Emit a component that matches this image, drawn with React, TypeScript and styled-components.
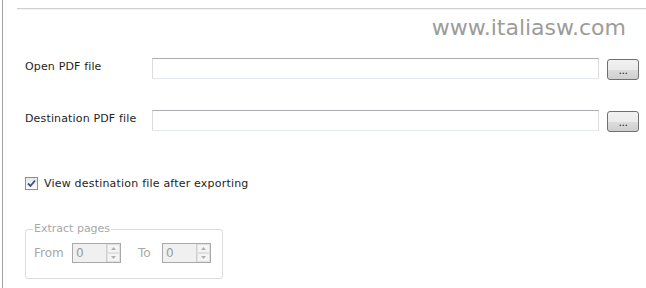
import React from 'react'
import styled, { createGlobalStyle } from 'styled-components'

const GlobalStyle = createGlobalStyle`
  html, body {
    margin: 0;
    padding: 0;
    background: #ffffff;
  }
  body {
    font-family: "DejaVu Sans", Verdana, sans-serif;
    font-size: 11px;
    color: #1e1e1e;
  }
`

const Frame = styled.div`
  margin-left: 2px;
  height: 288px;
  border-left: 1px solid #a3a3a3;
  box-sizing: border-box;
  overflow: hidden;
`

const TopRule = styled.div`
  margin: 8px 0 0 14px;
  height: 1px;
  background: #cfcfcf;
  border-bottom: 1px solid #f4f4f4;
`

const Watermark = styled.div`
  text-align: right;
  padding-right: 20px;
  margin-top: 5px;
  height: 26px;
  font-size: 22px;
  line-height: 26px;
  color: #9c9c9c;
`

const Content = styled.div`
  padding: 0 7px 0 22px;
  display: flex;
  flex-direction: column;
`

const FileRow = styled.div<{ $top: number }>`
  display: flex;
  align-items: center;
  gap: 8px;
  margin-top: ${p => p.$top}px;
  height: 21px;
`

const Label = styled.div`
  width: 119px;
  flex: none;
  margin-top: -4px;
  letter-spacing: 0.15px;
`

const PathInput = styled.input`
  flex: 1;
  height: 21px;
  box-sizing: border-box;
  border: 1px solid #dcdcdc;
  border-top-color: #abadb3;
  border-bottom-color: #e3e9ef;
  background: #fff;
  padding: 0 4px;
  font: inherit;
  outline: none;
`

const BrowseButton = styled.button`
  width: 32px;
  height: 21px;
  margin-top: 2px;
  flex: none;
  box-sizing: border-box;
  border: 1px solid #707070;
  border-radius: 3px;
  background: linear-gradient(#f2f2f2 0%, #ebebeb 50%, #dddddd 51%, #cfcfcf 100%);
  font: inherit;
  font-size: 11px;
  line-height: 17px;
  padding: 2px 0 0;
  color: #1e1e1e;
  letter-spacing: -0.5px;
`

const CheckRow = styled.label`
  display: flex;
  align-items: center;
  gap: 6px;
  margin-top: 46px;
  font-size: 11px;
  letter-spacing: 0.2px;
`

const CheckBox = styled.span`
  width: 13px;
  height: 13px;
  box-sizing: border-box;
  border: 1px solid #8f8f8f;
  background: linear-gradient(#e8e8e8, #fbfbfb);
  display: flex;
  align-items: center;
  justify-content: center;
`

const GroupBox = styled.fieldset`
  margin: 33px 0 0 0;
  width: 198px;
  height: 56px;
  box-sizing: border-box;
  border: 1px solid #dcdcdc;
  border-radius: 3px;
  padding: 0 0 0 8px;
  color: #a8a8a8;
  font-size: 11px;
`

const Legend = styled.legend`
  padding: 0 1px;
  margin-left: -1px;
  line-height: 12px;
`

const SpinRow = styled.div`
  display: flex;
  align-items: center;
  margin-top: 8px;
`

const SpinLabel = styled.span<{ $w: number }>`
  width: ${p => p.$w}px;
  font-size: 12px;
`

const Spin = styled.div`
  display: flex;
  width: 49px;
  height: 20px;
  box-sizing: border-box;
  border: 1px solid #a9a9a9;
  background: #f0f0f0;
`

const SpinValue = styled.div`
  flex: 1;
  padding-left: 3px;
  line-height: 18px;
  color: #9a9a9a;
  font-size: 12px;
`

const SpinButtons = styled.div`
  width: 13px;
  display: flex;
  flex-direction: column;
  border-left: 1px solid #d0d0d0;
`

const SpinArrow = styled.div`
  flex: 1;
  display: flex;
  align-items: center;
  justify-content: center;
  background: #f4f4f4;
  border: 1px solid #e0e0e0;
`

const Arrow = ({ up }: { up?: boolean }) => (
  <svg width="5" height="3" viewBox="0 0 5 3">
    <path d={up ? 'M0 3 L2.5 0 L5 3 Z' : 'M0 0 L2.5 3 L5 0 Z'} fill="#b0b0b0" />
  </svg>
)

const SpinBox = ({ value }: { value: number }) => (
  <Spin>
    <SpinValue>{value}</SpinValue>
    <SpinButtons>
      <SpinArrow><Arrow up /></SpinArrow>
      <SpinArrow><Arrow /></SpinArrow>
    </SpinButtons>
  </Spin>
)

export default function App() {
  return (
    <>
      <GlobalStyle />
      <Frame>
        <TopRule />
        <Watermark>www.italiasw.com</Watermark>
        <Content>
          <FileRow $top={17}>
            <Label>Open PDF file</Label>
            <PathInput />
            <BrowseButton>...</BrowseButton>
          </FileRow>
          <FileRow $top={31}>
            <Label>Destination PDF file</Label>
            <PathInput />
            <BrowseButton>...</BrowseButton>
          </FileRow>
          <CheckRow>
            <CheckBox>
              <svg width="9" height="9" viewBox="0 0 9 9">
                <path d="M1 4.5 L3.5 7 L8 1.5" fill="none" stroke="#3d4f7a" strokeWidth="1.8" />
              </svg>
            </CheckBox>
            View destination file after exporting
          </CheckRow>
          <GroupBox>
            <Legend>Extract pages</Legend>
            <SpinRow>
              <SpinLabel $w={38}>From</SpinLabel>
              <SpinBox value={0} />
              <SpinLabel $w={17} />
              <SpinLabel $w={24}>To</SpinLabel>
              <SpinBox value={0} />
            </SpinRow>
          </GroupBox>
        </Content>
      </Frame>
    </>
  )
}
